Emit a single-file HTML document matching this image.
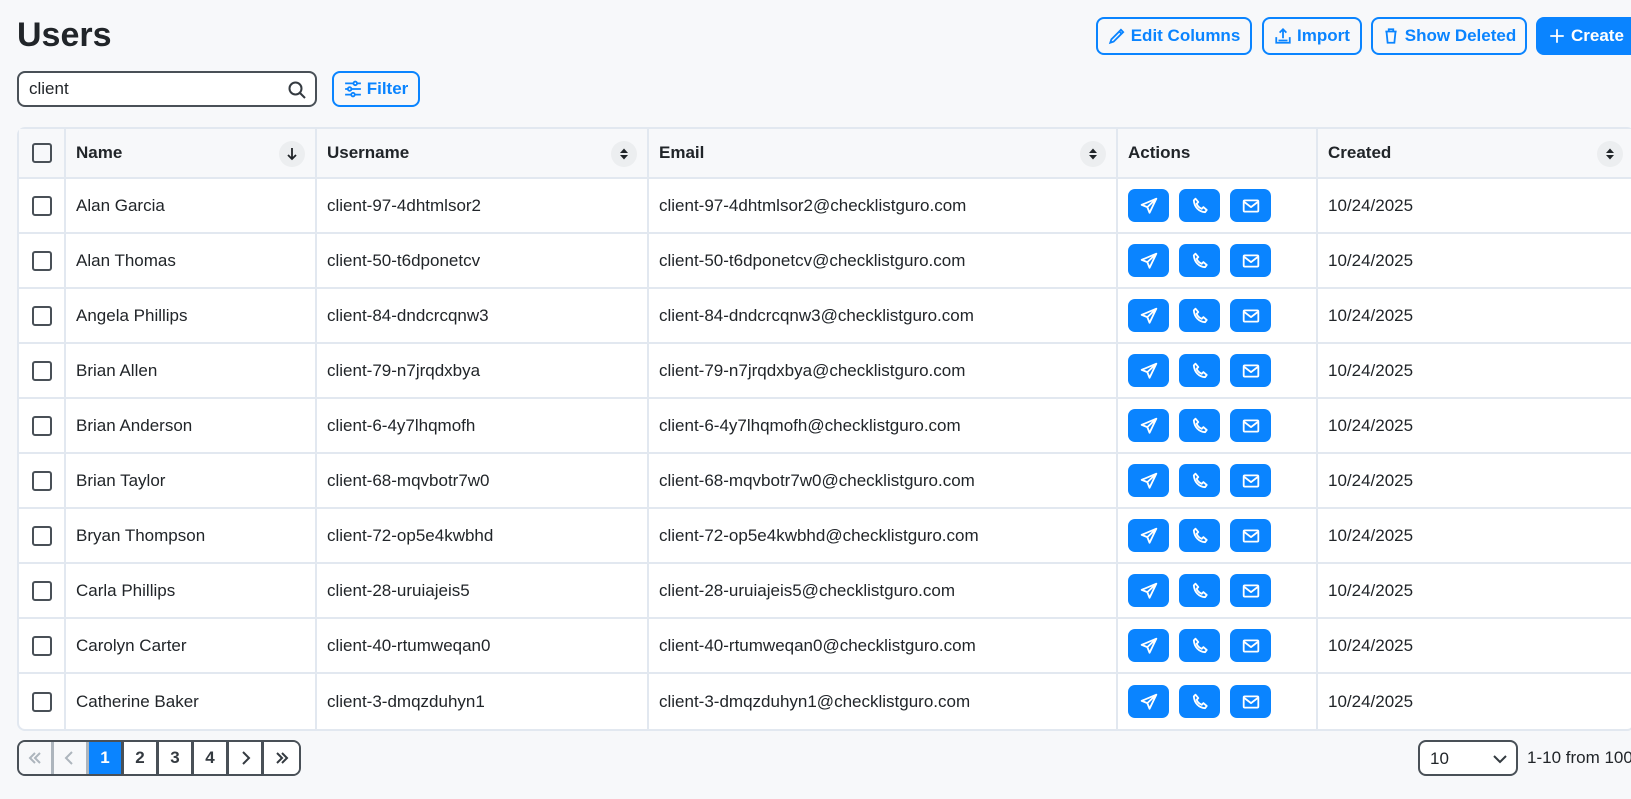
<!DOCTYPE html>
<html><head><meta charset="utf-8"><style>
*{box-sizing:border-box;margin:0;padding:0}
body{width:1631px;height:799px;overflow:hidden;background:#f7f8fa;font-family:"Liberation Sans",sans-serif;color:#212529;position:relative}
.abs{position:absolute}
h1{position:absolute;left:17px;top:16px;font-size:34px;font-weight:bold;color:#212529}
.btn{position:absolute;top:17px;height:38px;border:2px solid #0a84ff;border-radius:8px;color:#0a84ff;font-weight:bold;font-size:17px;display:flex;align-items:center;justify-content:center;gap:5px;background:#f7f8fa}
.btn svg{width:18px;height:18px;stroke:#0a84ff;fill:none;stroke-width:1.6}
.search{left:17px;top:71px;width:300px;height:36px;border:2px solid #495057;border-radius:8px;background:#fff;font-size:17px;padding:6px 10px}
table{position:absolute;left:17px;top:127px;border-collapse:separate;border-spacing:0;background:#fff;border:2px solid #e2e8f0;border-radius:8px;width:1614px;table-layout:fixed}
td,th{border-right:2px solid #e2e8f0;border-bottom:2px solid #e2e8f0;font-size:17px;text-align:left;padding:0 10px;height:55px;white-space:nowrap}
td:last-child,th:last-child{border-right:none}
tr:last-child td{border-bottom:none}
th{height:50px;background:#f7f8fa;font-weight:bold;position:relative}
.cb{width:20px;height:20px;border:2px solid #495057;border-radius:3px;margin:auto}
.sort{position:absolute;right:10px;top:12px;width:26px;height:26px;border-radius:50%;background:#eceef0;display:flex;align-items:center;justify-content:center}
.ab{display:inline-flex;width:41px;height:33px;background:#0a84ff;border-radius:7px;margin-right:10px;align-items:center;justify-content:center;vertical-align:middle}
.ab svg{width:18px;height:18px;stroke:#fff;fill:none;stroke-width:1.6;stroke-linejoin:round}
.pg{position:absolute;left:17px;top:740px;height:36px;display:flex;border:2px solid #495057;border-radius:8px;overflow:hidden}
.pg div{width:35px;height:32px;border-right:3px solid #495057;background:#fff;display:flex;align-items:center;justify-content:center;font-weight:bold;font-size:17px;color:#343a40}
.pg div:last-child{border-right:none}
.pg svg{width:18px;height:18px;fill:none;stroke-width:2}
</style></head><body>
<h1>Users</h1>
<div class="btn" style="left:1096px;width:156px"><svg viewBox="0 0 16 16"><path d="M11.5 2.5l2 2L5 13l-3 1 1-3z M10 4l2 2"/></svg>Edit Columns</div>
<div class="btn" style="left:1262px;width:100px"><svg viewBox="0 0 16 16"><path d="M8 10V2M5 5l3-3 3 3M2 9v5h12V9M4 12h8"/></svg>Import</div>
<div class="btn" style="left:1371px;width:156px"><svg viewBox="0 0 16 16"><path d="M3 4h10M6 4V2h4v2M4 4l1 10h6l1-10"/></svg>Show Deleted</div>
<div class="btn" style="left:1536px;width:110px;background:#0a84ff;color:#fff;justify-content:flex-start;padding-left:10px"><svg viewBox="0 0 16 16" style="stroke:#fff"><path d="M8 2v12M2 8h12"/></svg>Create</div>
<div class="abs search">client<svg class="abs" style="right:8px;top:7px" width="20" height="20" viewBox="0 0 20 20" fill="none" stroke="#343a40" stroke-width="2"><circle cx="8.5" cy="8.5" r="6"/><path d="M13 13l5 5"/></svg></div>
<div class="btn" style="left:332px;top:71px;width:88px;height:36px"><svg viewBox="0 0 16 16"><path d="M1 3h14M1 8h14M1 13h14"/><circle cx="10" cy="3" r="1.6" fill="#fff"/><circle cx="5" cy="8" r="1.6" fill="#fff"/><circle cx="8" cy="13" r="1.6" fill="#fff"/></svg>Filter</div>
<table>
<colgroup><col style="width:47px"><col style="width:251px"><col style="width:332px"><col style="width:469px"><col style="width:200px"><col style="width:315px"></colgroup>
<tr><th><div class="cb"></div></th><th>Name<span class="sort"><svg width="12" height="14" viewBox="0 0 12 14" fill="none" stroke="#212529" stroke-width="1.8"><path d="M6 1v11M2 8l4 4 4-4"/></svg></span></th><th>Username<span class="sort"><svg width="10" height="14" viewBox="0 0 10 14" fill="#212529"><path d="M1 6L5 1.5 9 6zM1 8l4 4.5L9 8z"/></svg></span></th><th>Email<span class="sort"><svg width="10" height="14" viewBox="0 0 10 14" fill="#212529"><path d="M1 6L5 1.5 9 6zM1 8l4 4.5L9 8z"/></svg></span></th><th>Actions</th><th>Created<span class="sort"><svg width="10" height="14" viewBox="0 0 10 14" fill="#212529"><path d="M1 6L5 1.5 9 6zM1 8l4 4.5L9 8z"/></svg></span></th></tr>
<tr><td><div class="cb"></div></td><td>Alan Garcia</td><td>client-97-4dhtmlsor2</td><td>client-97-4dhtmlsor2@checklistguro.com</td><td class="acts"></td><td>10/24/2025</td></tr>
<tr><td><div class="cb"></div></td><td>Alan Thomas</td><td>client-50-t6dponetcv</td><td>client-50-t6dponetcv@checklistguro.com</td><td class="acts"></td><td>10/24/2025</td></tr>
<tr><td><div class="cb"></div></td><td>Angela Phillips</td><td>client-84-dndcrcqnw3</td><td>client-84-dndcrcqnw3@checklistguro.com</td><td class="acts"></td><td>10/24/2025</td></tr>
<tr><td><div class="cb"></div></td><td>Brian Allen</td><td>client-79-n7jrqdxbya</td><td>client-79-n7jrqdxbya@checklistguro.com</td><td class="acts"></td><td>10/24/2025</td></tr>
<tr><td><div class="cb"></div></td><td>Brian Anderson</td><td>client-6-4y7lhqmofh</td><td>client-6-4y7lhqmofh@checklistguro.com</td><td class="acts"></td><td>10/24/2025</td></tr>
<tr><td><div class="cb"></div></td><td>Brian Taylor</td><td>client-68-mqvbotr7w0</td><td>client-68-mqvbotr7w0@checklistguro.com</td><td class="acts"></td><td>10/24/2025</td></tr>
<tr><td><div class="cb"></div></td><td>Bryan Thompson</td><td>client-72-op5e4kwbhd</td><td>client-72-op5e4kwbhd@checklistguro.com</td><td class="acts"></td><td>10/24/2025</td></tr>
<tr><td><div class="cb"></div></td><td>Carla Phillips</td><td>client-28-uruiajeis5</td><td>client-28-uruiajeis5@checklistguro.com</td><td class="acts"></td><td>10/24/2025</td></tr>
<tr><td><div class="cb"></div></td><td>Carolyn Carter</td><td>client-40-rtumweqan0</td><td>client-40-rtumweqan0@checklistguro.com</td><td class="acts"></td><td>10/24/2025</td></tr>
<tr><td><div class="cb"></div></td><td>Catherine Baker</td><td>client-3-dmqzduhyn1</td><td>client-3-dmqzduhyn1@checklistguro.com</td><td class="acts"></td><td>10/24/2025</td></tr>
</table>
<div class="pg">
<div style="background:#f7f8fa;border-color:#adb5bd"><svg viewBox="0 0 18 18" stroke="#adb5bd"><path d="M9 4L4 9l5 5M14 4L9 9l5 5"/></svg></div><div style="background:#f7f8fa;border-color:#adb5bd"><svg viewBox="0 0 18 18" stroke="#adb5bd"><path d="M11 3L5 9l6 6"/></svg></div><div style="background:#0a84ff;color:#fff">1</div><div>2</div><div>3</div><div>4</div><div><svg viewBox="0 0 18 18" stroke="#343a40"><path d="M7 3l6 6-6 6"/></svg></div><div><svg viewBox="0 0 18 18" stroke="#343a40"><path d="M4 4l5 5-5 5M9 4l5 5-5 5"/></svg></div></div>
<div class="abs" style="left:1418px;top:740px;width:100px;height:36px;border:2px solid #495057;border-radius:8px;background:#fff;font-size:17px;padding:7px 10px">10<svg class="abs" style="right:8px;top:10px" width="16" height="14" viewBox="0 0 16 14" fill="none" stroke="#343a40" stroke-width="2"><path d="M2 4l6 6 6-6"/></svg></div>
<div class="abs" style="left:1527px;top:748px;font-size:17px;white-space:nowrap">1-10 from 100</div>
<script>
var h='<span class="ab"><svg viewBox="0 0 16 16"><path d="M14.5 1.5L1.5 7l5 2 2 5z M6.5 9l8-7.5"/></svg></span><span class="ab"><svg viewBox="0 0 16 16"><path d="M4 1.5l2.5 3-1.5 1.5c.8 2 2.5 3.7 4.5 4.5l1.5-1.5 3 2.5-1.5 2C7 13 3 9 2.5 3z"/></svg></span><span class="ab"><svg viewBox="0 0 16 16"><rect x="1.5" y="3" width="13" height="10" rx="1"/><path d="M1.5 4l6.5 5 6.5-5"/></svg></span>';
document.querySelectorAll('.acts').forEach(function(e){e.innerHTML=h});
</script>
</body></html>
